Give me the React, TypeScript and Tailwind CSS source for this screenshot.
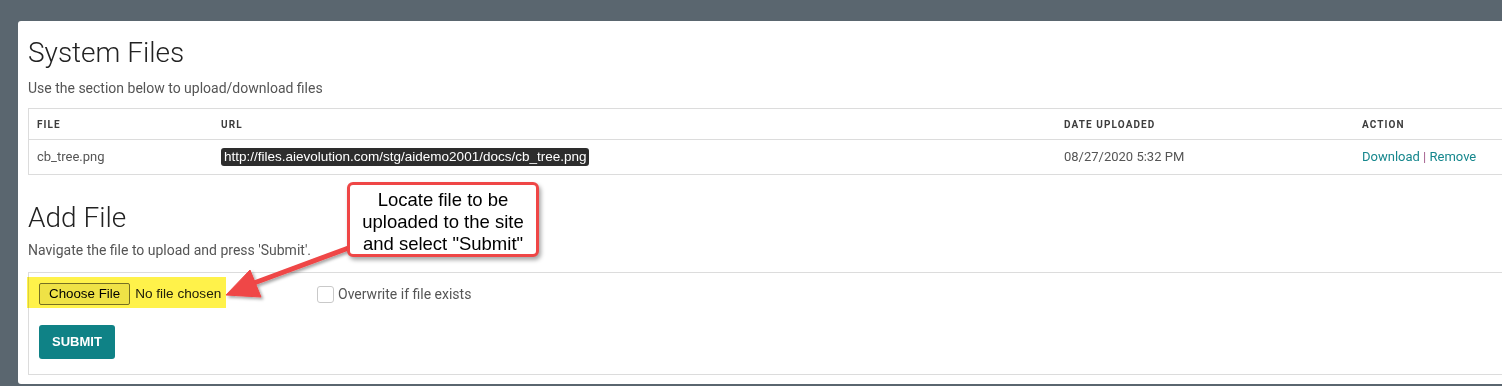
export default function App() {
  return (
    <div className="relative w-[1502px] h-[386px] overflow-hidden bg-[#5a666f] pt-[21px] pl-[18px] font-['Roboto',sans-serif]">
      <div className="w-[1530px] h-[363px] bg-white rounded-[3px] pl-[10px] pr-[10px] pt-[15px]">
        <h1 className="text-[28px] font-light leading-[34px] text-[#222]">System Files</h1>
        <p className="mt-[8px] text-[14px] leading-[20px] text-[#555]">
          Use the section below to upload/download files
        </p>

        {/* files table */}
        <div className="mt-[10px] border-l border-t border-[#dcdcdc]">
          <div className="grid grid-cols-[184px_843px_298px_1fr] h-[31px] items-center border-b border-[#dcdcdc] text-[10px] font-bold tracking-[1.1px] text-[#3d3d3d]">
            <div className="pl-[8px]">FILE</div>
            <div className="pl-[8px]">URL</div>
            <div className="pl-[8px]">DATE UPLOADED</div>
            <div className="pl-[8px]">ACTION</div>
          </div>
          <div className="grid grid-cols-[184px_843px_298px_1fr] h-[35px] items-center border-b border-[#dcdcdc] text-[13px] text-[#555]">
            <div className="pl-[8px]">cb_tree.png</div>
            <div className="pl-[8px]">
              <span className="inline-block h-[18px] rounded-[3px] bg-[#2d2d2d] px-[3px] text-[13.5px] leading-[18px] text-white font-['Liberation_Sans',Arial,sans-serif]">
                http://files.aievolution.com/stg/aidemo2001/docs/cb_tree.png
              </span>
            </div>
            <div className="pl-[8px]">08/27/2020 5:32 PM</div>
            <div className="pl-[8px] text-[#16878d]">
              Download <span className="text-[#a35c8c]">|</span> Remove
            </div>
          </div>
        </div>

        <h2 className="mt-[26px] text-[28px] font-light leading-[34px] text-[#222]">Add File</h2>
        <p className="mt-[5px] text-[14px] leading-[20px] text-[#555]">
          Navigate the file to upload and press 'Submit'.
        </p>

        {/* upload form */}
        <div className="relative mt-[12px] border border-[#dcdcdc] pl-[10px] pt-[10px] pb-[15px]">
          <div className="flex items-center">
            <div className="flex w-[278px] items-center font-['Liberation_Sans',Arial,sans-serif] text-[13.33px]">
              <button className="h-[22px] rounded-[2px] border border-[#767676] bg-[#efefef] px-[9px] leading-[20px] text-black">
                Choose File
              </button>
              <span className="ml-[5px] text-[13.6px] text-[#222]">No file chosen</span>
            </div>
            <span className="h-[17px] w-[17px] rounded-[3px] border border-[#c9c9c9] bg-white" />
            <span className="ml-[4px] text-[14px] text-[#555]">Overwrite if file exists</span>
          </div>
          <button className="mt-[20px] h-[34px] rounded-[3px] bg-[#0f8286] px-[13px] text-[13px] font-bold text-white font-['Liberation_Sans',Arial,sans-serif]">
            SUBMIT
          </button>

          {/* yellow highlight annotation */}
          <div className="pointer-events-none absolute left-[-2px] top-[4px] h-[31px] w-[199px] bg-[#fff24a] mix-blend-multiply" />
        </div>
      </div>

      {/* arrow annotation */}
      <svg className="pointer-events-none absolute left-0 top-0" width="1502" height="386">
        <defs>
          <filter id="shadow" x="-20%" y="-20%" width="140%" height="140%">
            <feDropShadow dx="2" dy="2" stdDeviation="1.5" floodColor="#000" floodOpacity="0.35" />
          </filter>
        </defs>
        <g filter="url(#shadow)" fill="#ef4646" stroke="#ef4646">
          <line x1="254" y1="283" x2="362" y2="243" strokeWidth="5" />
          <polygon points="226,295 250,270 261,297" strokeWidth="1" strokeLinejoin="round" />
        </g>
      </svg>

      {/* callout annotation */}
      <div className="absolute left-[347px] top-[182px] h-[75px] w-[192px] rounded-[6px] border-[3px] border-[#ef4646] bg-white pt-[4px] text-center text-[18.5px] leading-[22px] text-black shadow-[2px_3px_4px_rgba(0,0,0,0.35)] font-['Liberation_Sans',Arial,sans-serif]">
        Locate file to be
        <br />
        uploaded to the site
        <br />
        and select "Submit"
      </div>
    </div>
  )
}
